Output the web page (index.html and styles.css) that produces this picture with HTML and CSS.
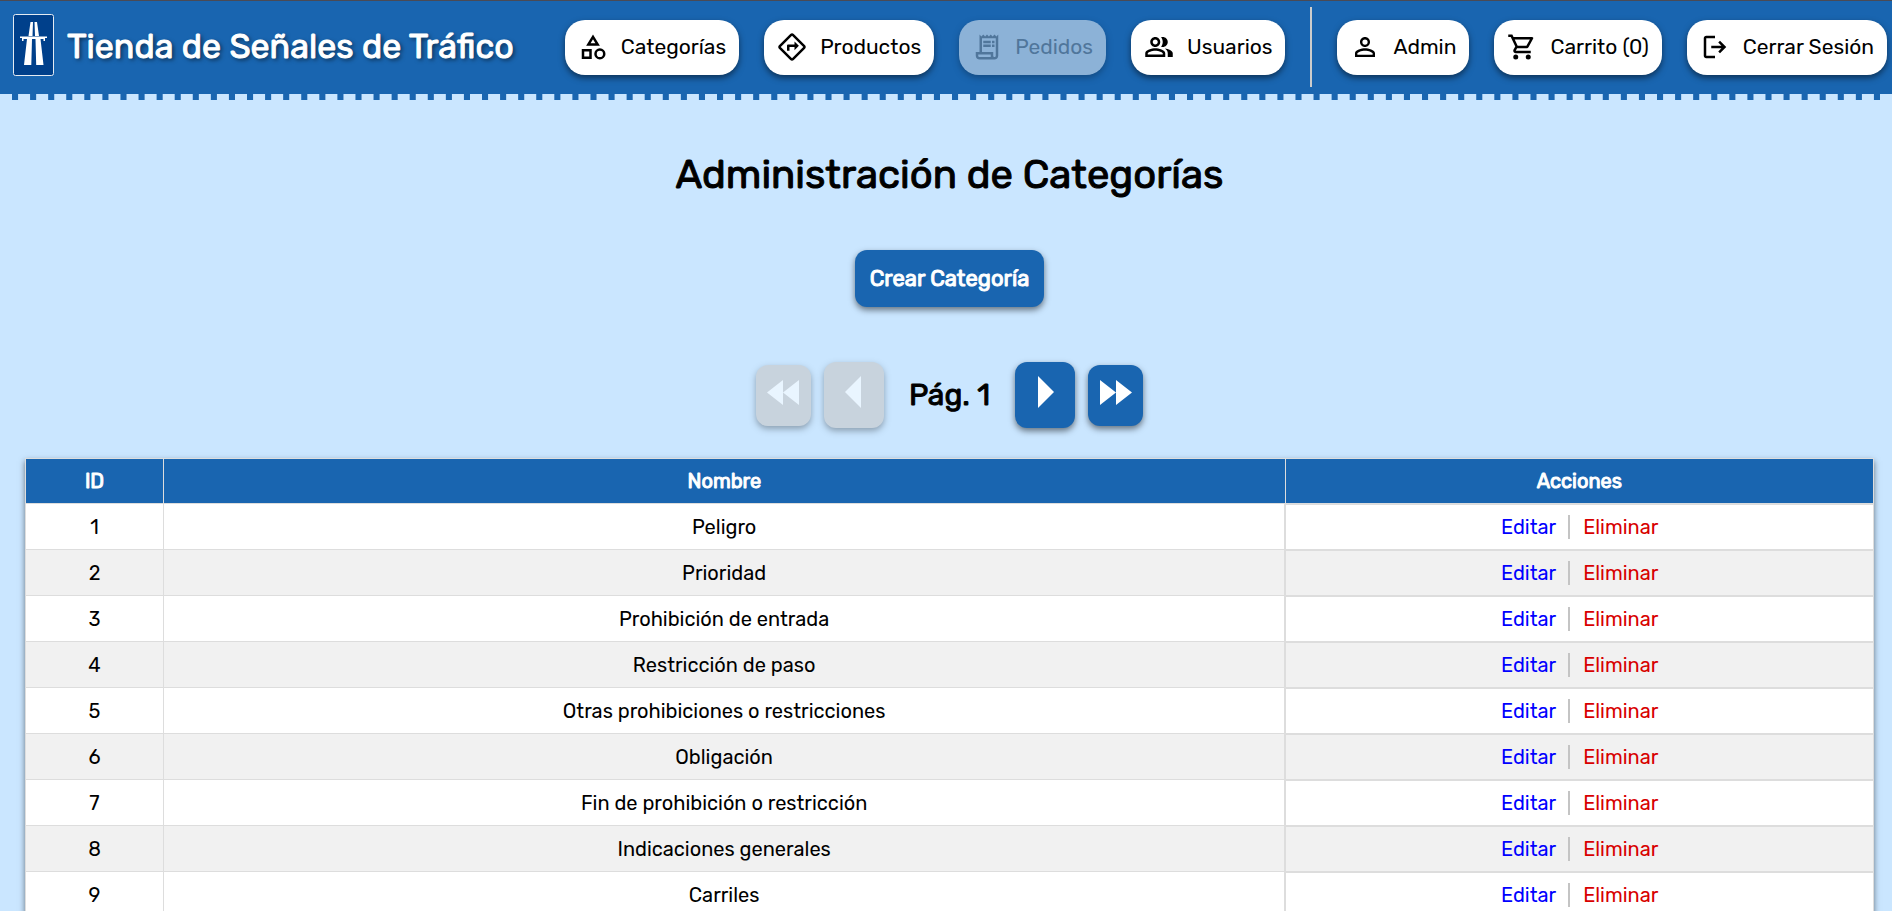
FILE: index.html
```html
<!DOCTYPE html>
<html lang="es">
<head>
<meta charset="utf-8">
<title>Administración de Categorías</title>
<link rel="stylesheet" href="styles.css">
</head>
<body>
<header class="header">
  <a class="brand" href="#">
    <svg class="brand-logo" viewBox="0 0 41 62" aria-hidden="true">
      <rect x=".5" y=".5" width="40" height="61" rx="2" fill="#00408b" stroke="#e4ebf2"/>
      <path fill="#fff" d="M17.500 8h2.500l-.5 14h-4zM21.500 8h2.500l2 14h-4zM7 22.500h27v1.500h-2v3h-1.500v-2h-20v2H9v-3H7zM14 25h5l-.7 26H11zM22.500 25h5l3 26h-7.300z"/>
    </svg>
    <span class="brand-name">Tienda de Señales de Tráfico</span>
  </a>
  <nav class="nav">
    <a class="nav-link" href="#"><svg class="icon" viewBox="0 0 24 24"><path d="M12 2l-5.500 9h11L12 2zm0 3.840L13.930 9h-3.870L12 5.840zM17.500 13a4.500 4.500 0 100 9 4.500 4.500 0 000-9zm0 7a2.500 2.500 0 010-5 2.500 2.500 0 010 5zM3 21.500h8v-8H3v8zm2-6h4v4H5v-4z"/></svg>Categorías</a>
    <a class="nav-link" href="#"><svg class="icon" viewBox="0 0 24 24"><path d="M22.430 10.590l-9.010-9.010c-.75-.75-2.070-.76-2.830 0l-9 9c-.78.78-.78 2.040 0 2.820l9 9c.39.39.9.58 1.410.58.51 0 1.020-.19 1.410-.58l8.990-8.990c.79-.76.8-2.020.03-2.820zm-10.420 10.400l-9-9 9-9 9 9-9 9zM8 11v4h2v-3h4v2.500l3.500-3.500L14 7.500V10H9c-.55 0-1 .45-1 1z"/></svg>Productos</a>
    <a class="nav-link nav-link-disabled" aria-disabled="true"><svg class="icon" viewBox="0 0 24 24"><path d="M19.500 3.500L18 2l-1.500 1.500L15 2l-1.500 1.500L12 2l-1.500 1.500L9 2 7.500 3.500 6 2v14H3v3c0 1.660 1.340 3 3 3h12c1.660 0 3-1.340 3-3V2l-1.500 1.500zM15 20H6c-.55 0-1-.45-1-1v-1h10v2zm4-1c0 .55-.45 1-1 1s-1-.45-1-1v-3H8V5h11v14zM9 7h6v2H9zM16 7h2v2h-2zM9 10h6v2H9zM16 10h2v2h-2z"/></svg>Pedidos</a>
    <a class="nav-link" href="#"><svg class="icon" viewBox="0 0 24 24"><path d="M16.670 13.130C18.040 14.060 19 15.320 19 17v3h4v-3c0-2.180-3.570-3.470-6.330-3.870zM15 12c2.210 0 4-1.790 4-4s-1.790-4-4-4c-.47 0-.91.1-1.330.24C14.500 5.270 15 6.580 15 8s-.5 2.730-1.330 3.760c.42.14.86.24 1.330.24zM9 12c2.210 0 4-1.790 4-4s-1.790-4-4-4-4 1.790-4 4 1.790 4 4 4zm0-6c1.100 0 2 .9 2 2s-.9 2-2 2-2-.9-2-2 .9-2 2-2zM9 13c-2.670 0-8 1.340-8 4v3h16v-3c0-2.660-5.330-4-8-4zm6 5H3v-.99C3.200 16.290 6.300 15 9 15s5.800 1.290 6 2v1z"/></svg>Usuarios</a>
    <span class="nav-divider"></span>
    <a class="nav-link" href="#"><svg class="icon" viewBox="0 0 24 24"><path d="M12 5.900a2.100 2.100 0 110 4.200 2.100 2.100 0 010-4.200m0 9c2.970 0 6.100 1.460 6.100 2.100v1.100H5.900V17c0-.64 3.130-2.100 6.100-2.100M12 4C9.790 4 8 5.790 8 8s1.790 4 4 4 4-1.790 4-4-1.790-4-4-4zm0 9c-2.670 0-8 1.340-8 4v3h16v-3c0-2.660-5.330-4-8-4z"/></svg>Admin</a>
    <a class="nav-link" href="#"><svg class="icon" viewBox="0 0 24 24"><path d="M15.550 13c.75 0 1.410-.41 1.750-1.030l3.580-6.490A.996.996 0 0020.010 4H5.210l-.94-2H1v2h2l3.600 7.590-1.350 2.440C4.520 15.370 5.480 17 7 17h12v-2H7l1.100-2h7.450zM6.160 6h12.150l-2.760 5H8.530L6.160 6zM7 18a2 2 0 100 4 2 2 0 000-4zm10 0a2 2 0 100 4 2 2 0 000-4z"/></svg>Carrito (0)</a>
    <a class="nav-link" href="#"><svg class="icon" viewBox="0 0 24 24"><path d="M5 3h7v2H5v14h7v2H5c-1.100 0-2-.9-2-2V5c0-1.100.9-2 2-2zM16 7l5 5-5 5-1.400-1.450L17.150 13H9v-2h8.150L14.600 8.450z"/></svg>Cerrar Sesión</a>
  </nav>
</header>
<main class="main">
  <h1 class="title">Administración de Categorías</h1>
  <button class="button create" type="button">Crear Categoría</button>
  <div class="pager">
    <button class="button pager-button pager-end" type="button" disabled aria-label="Primera página"><svg class="pager-icon" viewBox="0 0 34 32"><path d="M17 4v25L1 16.500zM33 4v25L17 16.500z"/></svg></button>
    <button class="button pager-button" type="button" disabled aria-label="Página anterior"><svg class="pager-icon" viewBox="0 0 34 32"><path d="M24 0v32L8 16z"/></svg></button>
    <span class="pager-label">Pág. 1</span>
    <button class="button pager-button" type="button" aria-label="Página siguiente"><svg class="pager-icon" viewBox="0 0 34 32"><path d="M10 0v32l16-16z"/></svg></button>
    <button class="button pager-button pager-end" type="button" aria-label="Última página"><svg class="pager-icon" viewBox="0 0 34 32"><path d="M1 4v25l16-12.500zM17 4v25l16-12.500z"/></svg></button>
  </div>
  <table class="table">
    <thead><tr><th class="col-id">ID</th><th class="col-name">Nombre</th><th>Acciones</th></tr></thead>
    <tbody>
      <tr><td>1</td><td>Peligro</td><td class="actions"><div class="action-list"><a class="edit" href="#">Editar</a><a class="delete" href="#">Eliminar</a></div></td></tr>
      <tr><td>2</td><td>Prioridad</td><td class="actions"><div class="action-list"><a class="edit" href="#">Editar</a><a class="delete" href="#">Eliminar</a></div></td></tr>
      <tr><td>3</td><td>Prohibición de entrada</td><td class="actions"><div class="action-list"><a class="edit" href="#">Editar</a><a class="delete" href="#">Eliminar</a></div></td></tr>
      <tr><td>4</td><td>Restricción de paso</td><td class="actions"><div class="action-list"><a class="edit" href="#">Editar</a><a class="delete" href="#">Eliminar</a></div></td></tr>
      <tr><td>5</td><td>Otras prohibiciones o restricciones</td><td class="actions"><div class="action-list"><a class="edit" href="#">Editar</a><a class="delete" href="#">Eliminar</a></div></td></tr>
      <tr><td>6</td><td>Obligación</td><td class="actions"><div class="action-list"><a class="edit" href="#">Editar</a><a class="delete" href="#">Eliminar</a></div></td></tr>
      <tr><td>7</td><td>Fin de prohibición o restricción</td><td class="actions"><div class="action-list"><a class="edit" href="#">Editar</a><a class="delete" href="#">Eliminar</a></div></td></tr>
      <tr><td>8</td><td>Indicaciones generales</td><td class="actions"><div class="action-list"><a class="edit" href="#">Editar</a><a class="delete" href="#">Eliminar</a></div></td></tr>
      <tr><td>9</td><td>Carriles</td><td class="actions"><div class="action-list"><a class="edit" href="#">Editar</a><a class="delete" href="#">Eliminar</a></div></td></tr>
    </tbody>
  </table>
</main>
</body>
</html>
```
FILE: styles.css
```css
* {
  box-sizing: border-box;
}

body {
  margin: 0;
  background: #cae6ff;
  color: #000;
  font-family: Rubik, Roboto, sans-serif;
  font-size: 20px;
  line-height: 24px;
}

a {
  text-decoration: none;
}

.header {
  display: flex;
  align-items: center;
  justify-content: space-between;
  padding: 6px 5px 7px 13px;
  border-top: 1px solid #4a4a55;
  border-bottom: 6px dashed #cae6ff;
  background: #1965b0;
}

.brand {
  display: flex;
  align-items: center;
  gap: 13px;
  color: #fff;
}

.brand-logo {
  width: 41px;
  height: 62px;
  margin-bottom: 4px;
}

.brand-name {
  font-size: 34px;
  line-height: 42px;
  -webkit-text-stroke: 1px currentColor;
  text-shadow: 2px 2px 4px rgba(0, 0, 0, .6);
  white-space: nowrap;
}

.nav {
  display: flex;
  align-items: center;
  gap: 25px;
}

.nav-link {
  display: flex;
  align-items: center;
  gap: 13px;
  height: 55px;
  padding: 0 13px;
  border-radius: 20px;
  background: #fff;
  box-shadow: 0 3px 6px rgba(0, 0, 0, .5);
  color: #000;
  font-size: 21px;
  line-height: 26px;
  white-space: nowrap;
}

.nav-link-disabled {
  opacity: .5;
  color: #888;
}

.icon {
  width: 30px;
  height: 30px;
  fill: currentColor;
}

.nav-divider {
  width: 2px;
  height: 80px;
  background: #ccc;
}

.main {
  display: flex;
  flex-direction: column;
  align-items: center;
  padding: 51px 18px 50px 25px;
}

.title {
  margin: 0;
  font-size: 40px;
  line-height: 48px;
  font-weight: 400;
  -webkit-text-stroke: 1px currentColor;
}

.button {
  border: 0;
  border-radius: 12px;
  background: #1965b0;
  box-shadow: 0 3px 6px rgba(0, 0, 0, .5);
  color: #fff;
  font: inherit;
}

.button:disabled {
  background: #c8c8c8;
  opacity: .6;
}

.create {
  height: 57px;
  margin-top: 51px;
  padding: 0 15px;
  font-size: 22px;
  -webkit-text-stroke: 1px currentColor;
}

.pager {
  display: flex;
  align-items: center;
  gap: 13px;
  margin: 55px 0 30px;
}

.pager-button {
  width: 60px;
  height: 66px;
  padding: 0 0 6px;
}

.pager-end {
  width: 55px;
  height: 61px;
}

.pager-icon {
  display: block;
  width: 34px;
  height: 32px;
  margin: 0 auto;
  fill: #fff;
}

.pager-label {
  padding: 0 12px;
  font-size: 30px;
  line-height: 36px;
  -webkit-text-stroke: 1px currentColor;
}

.table {
  width: 100%;
  border-collapse: collapse;
  table-layout: fixed;
  background: #fff;
  box-shadow: 0 3px 6px rgba(0, 0, 0, .5);
  text-align: center;
}

.table th,
.table td {
  border: 1px solid #ddd;
  padding: 0;
}

.table th {
  height: 45px;
  background: #1965b0;
  color: #fff;
  font-weight: 400;
  -webkit-text-stroke: 1px currentColor;
}

.table td {
  height: 46px;
}

.table tbody tr:nth-child(even) {
  background: #f1f1f1;
}

.table .actions {
  border-width: 2px 1px 2px 2px;
}

.col-id {
  width: 138px;
}

.col-name {
  width: 60.7%;
}

.action-list {
  display: flex;
  align-items: center;
  justify-content: center;
  line-height: 24px;
}

.edit {
  margin-right: 12px;
  color: #00f;
}

.delete {
  padding-left: 13px;
  border-left: 2px solid #c4c4c4;
  color: #d80000;
}
```
